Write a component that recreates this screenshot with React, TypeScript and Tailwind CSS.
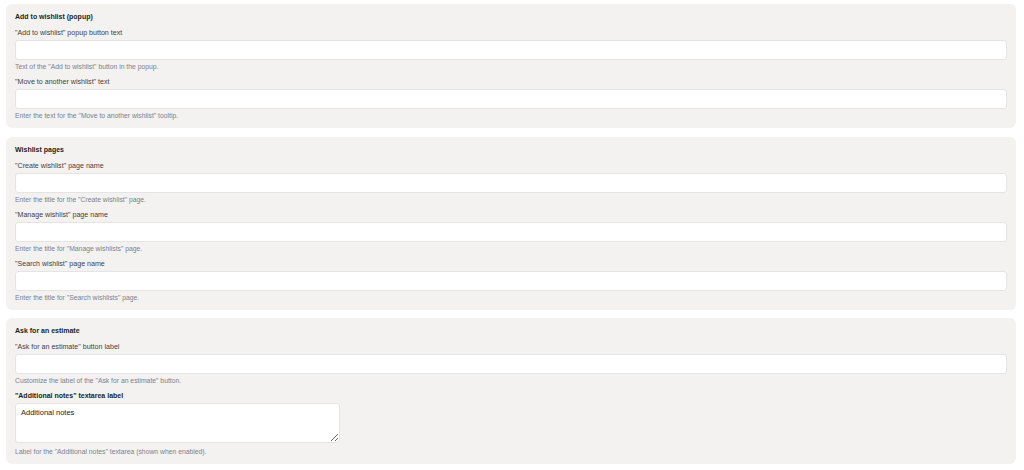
import React from "react";

type Field = { label: string; help: string; bold?: boolean; textarea?: boolean; value?: string };

const sections: { title: string; fields: Field[] }[] = [
  {
    title: "Add to wishlist (popup)",
    fields: [
      { label: "\"Add to wishlist\" popup button text", help: "Text of the \"Add to wishlist\" button in the popup." },
      { label: "\"Move to another wishlist\" text", help: "Enter the text for the \"Move to another wishlist\" tooltip." },
    ],
  },
  {
    title: "Wishlist pages",
    fields: [
      { label: "\"Create wishlist\" page name", help: "Enter the title for the \"Create wishlist\" page." },
      { label: "\"Manage wishlist\" page name", help: "Enter the title for \"Manage wishlists\" page." },
      { label: "\"Search wishlist\" page name", help: "Enter the title for \"Search wishlists\" page." },
    ],
  },
  {
    title: "Ask for an estimate",
    fields: [
      { label: "\"Ask for an estimate\" button label", help: "Customize the label of the \"Ask for an estimate\" button." },
      {
        label: "\"Additional notes\" textarea label",
        help: "Label for the \"Additional notes\" textarea (shown when enabled).",
        bold: true,
        textarea: true,
        value: "Additional notes",
      },
    ],
  },
];

function FieldRow({ f }: { f: Field }) {
  return (
    <div className="flex flex-col">
      <label
        className={
          f.bold
            ? "text-[7px] leading-[10px] font-bold text-[#1e1e1e] mb-[2px]"
            : "text-[7.1px] leading-[10px] text-[#3f3f46] mb-[2px]"
        }
      >
        {f.label}
      </label>
      {f.textarea ? (
        <textarea
          defaultValue={f.value}
          className="block w-[325px] h-[40px] bg-white border border-[#e4e4e4] rounded-[3px] px-[5px] py-[4px] text-[7.5px] leading-[10px] text-[#1e1e1e] outline-none"
          style={{ fontFamily: "'Liberation Sans', Arial, sans-serif" }}
        />
      ) : (
        <input
          type="text"
          className="block w-full h-[20px] bg-white border border-[#e4e4e4] rounded-[3px] outline-none"
        />
      )}
      <p
        className={
          f.textarea
            ? "text-[6.8px] leading-[9px] text-[#7b7f8f] mt-[3.5px]"
            : "text-[6.8px] leading-[9px] text-[#7b7f8f] mt-[2px]"
        }
      >
        {f.help}
      </p>
    </div>
  );
}

export default function App() {
  return (
    <div
      className="w-[1024px] h-[470px] bg-white pl-[6px] pr-[8px] pt-[4px] flex flex-col gap-[8.5px] overflow-hidden"
      style={{ fontFamily: "'Liberation Sans', Arial, sans-serif" }}
    >
      {sections.map((s) => (
        <div key={s.title} className="bg-[#f3f2f1] rounded-[6px] px-[9px] pt-[8px] pb-[8px] flex flex-col">
          <h2 className="text-[7px] leading-[10px] font-bold text-[#1e1e1e] mb-[6px]">{s.title}</h2>
          <div className="flex flex-col gap-[6px]">
            {s.fields.map((f) => (
              <FieldRow key={f.label} f={f} />
            ))}
          </div>
        </div>
      ))}
    </div>
  );
}
